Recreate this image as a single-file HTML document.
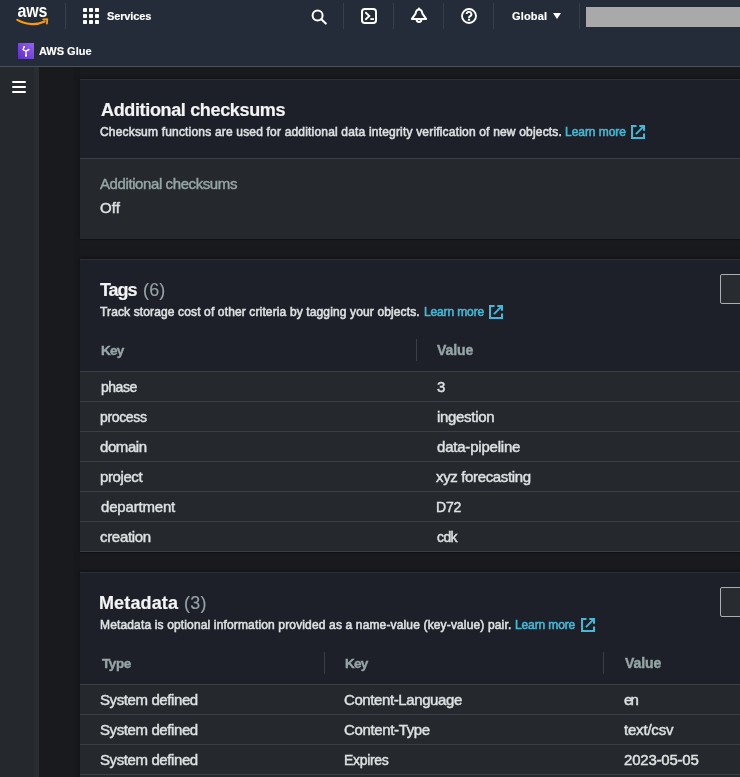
<!DOCTYPE html>
<html><head><meta charset="utf-8"><style>
html,body{margin:0;padding:0;width:740px;height:777px;overflow:hidden;background:#191a1e}
.box{position:absolute;box-sizing:content-box}
.t{position:absolute;white-space:nowrap;line-height:20px;font-family:"Liberation Sans",sans-serif;-webkit-text-stroke:0.45px currentColor;will-change:transform}
.ico{position:absolute;overflow:visible;will-change:transform}
</style></head><body>
<div class="box" style="left:0;top:0;width:740px;height:66px;background:#232c38"></div>
<div class="box" style="left:0;top:66px;width:740px;height:1px;background:#4b525b"></div>
<svg class="ico" style="left:0;top:0" width="60" height="30" viewBox="0 0 60 30">
<text x="17.6" y="16.6" font-family="Liberation Sans" font-size="18.6" font-weight="700" fill="#ffffff" transform="translate(17.6 0) scale(0.86 1) translate(-17.6 0)" letter-spacing="-0.2">aws</text>
<path d="M17.3 19.9 Q31 27.5 44.6 21.4" fill="none" stroke="#ff9900" stroke-width="2.2" stroke-linecap="round"/>
<path d="M43.2 19.3 L47.3 19.1 L46.9 23.6" fill="none" stroke="#ff9900" stroke-width="1.8" stroke-linecap="round" stroke-linejoin="round"/>
</svg>
<div class="box" style="left:65px;top:3px;width:1px;height:26px;background:#36404c"></div>
<div class="box" style="left:343px;top:3px;width:1px;height:26px;background:#36404c"></div>
<div class="box" style="left:393px;top:3px;width:1px;height:26px;background:#36404c"></div>
<div class="box" style="left:443px;top:3px;width:1px;height:26px;background:#36404c"></div>
<div class="box" style="left:493px;top:3px;width:1px;height:26px;background:#36404c"></div>
<div class="box" style="left:579px;top:3px;width:1px;height:26px;background:#36404c"></div>
<svg class="ico" style="left:83px;top:8px" width="16" height="16" viewBox="0 0 16 16"><rect x="0" y="0" width="4" height="4" rx="0.8" fill="#fff"/><rect x="6" y="0" width="4" height="4" rx="0.8" fill="#fff"/><rect x="12" y="0" width="4" height="4" rx="0.8" fill="#fff"/><rect x="0" y="6" width="4" height="4" rx="0.8" fill="#fff"/><rect x="6" y="6" width="4" height="4" rx="0.8" fill="#fff"/><rect x="12" y="6" width="4" height="4" rx="0.8" fill="#fff"/><rect x="0" y="12" width="4" height="4" rx="0.8" fill="#fff"/><rect x="6" y="12" width="4" height="4" rx="0.8" fill="#fff"/><rect x="12" y="12" width="4" height="4" rx="0.8" fill="#fff"/></svg>
<svg class="ico" style="left:0;top:0" width="1" height="1"><circle cx="317.6" cy="15.6" r="5" fill="none" stroke="#fff" stroke-width="2"/><path d="M321.3 19.3L325.8 23.6" stroke="#fff" stroke-width="2.1" stroke-linecap="round"/></svg>
<svg class="ico" style="left:361px;top:8px" width="16" height="16" viewBox="0 0 16 16"><rect x="1" y="1" width="14" height="14" rx="2.8" fill="none" stroke="#fff" stroke-width="2"/><path d="M4.3 4.3L8.3 8L4.3 11.7" fill="none" stroke="#fff" stroke-width="1.9"/><path d="M9.3 11.1h3.7" stroke="#fff" stroke-width="1.8"/></svg>
<svg class="ico" style="left:0;top:0" width="1" height="1"><path d="M419 9.6C416.6 9.6 415.9 11.6 415.6 13.6L411.9 18.9H426.1L422.4 13.6C422.1 11.6 421.4 9.6 419 9.6Z" fill="none" stroke="#fff" stroke-width="2" stroke-linejoin="round"/><circle cx="419" cy="8.6" r="1" fill="#fff"/><path d="M416.6 19.6A2.4 2.4 0 0 0 421.4 19.6" fill="none" stroke="#fff" stroke-width="2"/></svg>
<svg class="ico" style="left:461px;top:8px" width="16" height="16" viewBox="0 0 16 16"><circle cx="8" cy="8" r="7" fill="none" stroke="#fff" stroke-width="1.9"/><path d="M5.6 6.1a2.4 2.3 0 1 1 3.5 2.1c-.8.4-1.1.8-1.1 1.8" fill="none" stroke="#fff" stroke-width="1.9"/><rect x="6.9" y="10.7" width="2.2" height="2" fill="#fff"/></svg>
<svg class="ico" style="left:553px;top:13px" width="8" height="6" viewBox="0 0 8 6"><path d="M0 0h8L4 6z" fill="#fff"/></svg>
<div class="box" style="left:586px;top:7px;width:160px;height:20px;background:#a9a9a9"></div>
<svg class="ico" style="left:18px;top:43px" width="16" height="16" viewBox="0 0 16 16">
<defs><linearGradient id="gg" x1="0" y1="1" x2="1" y2="0"><stop offset="0" stop-color="#5a30c0"/><stop offset="1" stop-color="#9a5cff"/></linearGradient></defs>
<rect width="16" height="16" fill="url(#gg)"/>
<path d="M8 13V8.3L5 6.6L6.2 3.8M8 8.3L10.6 6.6" fill="none" stroke="#fff" stroke-width="1.3" stroke-linejoin="round" stroke-linecap="round"/><circle cx="6.2" cy="3.8" r="0.9" fill="#fff"/><circle cx="10.6" cy="6.6" r="0.9" fill="#fff"/><rect x="7.1" y="11.6" width="1.8" height="1.8" fill="#fff"/>
</svg>
<div class="box" style="left:0;top:67px;width:39px;height:710px;background:#25282c"></div>
<div class="box" style="left:34px;top:67px;width:5px;height:710px;background:#292c31"></div>
<div class="box" style="left:12px;top:81px;width:14px;height:2px;background:#fff;border-radius:1px"></div>
<div class="box" style="left:12px;top:86px;width:14px;height:2px;background:#fff;border-radius:1px"></div>
<div class="box" style="left:12px;top:91px;width:14px;height:2px;background:#fff;border-radius:1px"></div>
<div class="box" style="left:39px;top:67px;width:701px;height:710px;background:#191a1e"></div>
<div class="box" style="left:73px;top:67px;width:7px;height:710px;background:#17181b"></div>
<div class="box" style="left:80px;top:79px;width:700px;height:160px;background:#25282c;box-shadow:0 1px 0 #101115, 0 -1px 3px rgba(0,0,0,.4)"></div>
<div class="box" style="left:80px;top:79px;width:700px;height:79px;background:#1e2029"></div>
<div class="box" style="left:80px;top:79px;width:700px;height:1px;background:#2c3038"></div>
<div class="box" style="left:80px;top:158px;width:700px;height:1px;background:#3a3f46"></div>
<svg class="ico" style="left:631px;top:125px" width="14" height="14" viewBox="0 0 14 14"><path d="M5.5 1H1V13H13V8.5" fill="none" stroke="#44b9d6" stroke-width="2"/><path d="M8.3 1H13V5.7" fill="none" stroke="#44b9d6" stroke-width="2"/><path d="M12.6 1.4L4.9 9.1" fill="none" stroke="#44b9d6" stroke-width="2"/></svg>
<div class="box" style="left:80px;top:259px;width:700px;height:293px;background:#25282c;box-shadow:0 1px 0 #101115, 0 -1px 3px rgba(0,0,0,.4)"></div>
<div class="box" style="left:80px;top:259px;width:700px;height:112px;background:#1e2029"></div>
<div class="box" style="left:80px;top:259px;width:700px;height:1px;background:#2c3038"></div>
<svg class="ico" style="left:489px;top:305px" width="14" height="14" viewBox="0 0 14 14"><path d="M5.5 1H1V13H13V8.5" fill="none" stroke="#44b9d6" stroke-width="2"/><path d="M8.3 1H13V5.7" fill="none" stroke="#44b9d6" stroke-width="2"/><path d="M12.6 1.4L4.9 9.1" fill="none" stroke="#44b9d6" stroke-width="2"/></svg>
<div class="box" style="left:720px;top:274px;width:40px;height:28px;border:1px solid #a9afb0;border-radius:2px;background:#282b2f"></div>
<div class="box" style="left:416px;top:339px;width:1px;height:22px;background:#3a3f46"></div>
<div class="box" style="left:80px;top:371px;width:700px;height:1px;background:#3a3f46"></div>
<div class="box" style="left:80px;top:401px;width:700px;height:1px;background:#3a3f46"></div>
<div class="box" style="left:80px;top:431px;width:700px;height:1px;background:#3a3f46"></div>
<div class="box" style="left:80px;top:461px;width:700px;height:1px;background:#3a3f46"></div>
<div class="box" style="left:80px;top:491px;width:700px;height:1px;background:#3a3f46"></div>
<div class="box" style="left:80px;top:521px;width:700px;height:1px;background:#3a3f46"></div>
<div class="box" style="left:80px;top:551px;width:700px;height:1px;background:#3a3f46"></div>
<div class="box" style="left:80px;top:572px;width:700px;height:212px;background:#25282c;box-shadow:0 1px 0 #101115, 0 -1px 3px rgba(0,0,0,.4)"></div>
<div class="box" style="left:80px;top:572px;width:700px;height:112px;background:#1e2029"></div>
<div class="box" style="left:80px;top:572px;width:700px;height:1px;background:#2c3038"></div>
<svg class="ico" style="left:581px;top:618px" width="14" height="14" viewBox="0 0 14 14"><path d="M5.5 1H1V13H13V8.5" fill="none" stroke="#44b9d6" stroke-width="2"/><path d="M8.3 1H13V5.7" fill="none" stroke="#44b9d6" stroke-width="2"/><path d="M12.6 1.4L4.9 9.1" fill="none" stroke="#44b9d6" stroke-width="2"/></svg>
<div class="box" style="left:720px;top:587px;width:40px;height:28px;border:1px solid #a9afb0;border-radius:2px;background:#282b2f"></div>
<div class="box" style="left:324px;top:652px;width:1px;height:22px;background:#3a3f46"></div>
<div class="box" style="left:603px;top:652px;width:1px;height:22px;background:#3a3f46"></div>
<div class="box" style="left:80px;top:684px;width:700px;height:1px;background:#3a3f46"></div>
<div class="box" style="left:80px;top:714px;width:700px;height:1px;background:#3a3f46"></div>
<div class="box" style="left:80px;top:744px;width:700px;height:1px;background:#3a3f46"></div>
<div class="box" style="left:80px;top:774px;width:700px;height:1px;background:#3a3f46"></div>
<div class="t" style="left:107.40px;top:6px;font-size:11px;font-weight:700;color:#ffffff;letter-spacing:-0.143px;-webkit-text-stroke:0.15px #ffffff;">Services</div>
<div class="t" style="left:511.60px;top:6px;font-size:11px;font-weight:700;color:#ffffff;letter-spacing:0.180px;-webkit-text-stroke:0.15px #ffffff;">Global</div>
<div class="t" style="left:39.00px;top:41px;font-size:11px;font-weight:700;color:#ffffff;letter-spacing:0.000px;-webkit-text-stroke:0.15px #ffffff;">AWS Glue</div>
<div class="t" style="left:100.80px;top:100px;font-size:18px;font-weight:700;color:#f2f3f3;letter-spacing:-0.347px;-webkit-text-stroke:0.2px #f2f3f3;">Additional checksums</div>
<div class="t" style="left:100.00px;top:122px;font-size:12px;font-weight:400;color:#dce1e1;letter-spacing:0.184px;-webkit-text-stroke:0.55px #dce1e1;">Checksum functions are used for additional data integrity verification of new objects.</div>
<div class="t" style="left:565.00px;top:122px;font-size:12px;font-weight:400;color:#44b9d6;letter-spacing:-0.044px;-webkit-text-stroke:0.55px #44b9d6;">Learn more</div>
<div class="t" style="left:100.40px;top:174px;font-size:15.0px;font-weight:400;color:#95a5a6;letter-spacing:-0.405px;-webkit-text-stroke:0.45px #95a5a6;">Additional checksums</div>
<div class="t" style="left:100.40px;top:198px;font-size:15.0px;font-weight:400;color:#dce1e1;letter-spacing:0.150px;-webkit-text-stroke:0.45px #dce1e1;">Off</div>
<div class="t" style="left:100.30px;top:280px;font-size:18px;font-weight:700;color:#f2f3f3;letter-spacing:-1.067px;-webkit-text-stroke:0.2px #f2f3f3;">Tags</div>
<div class="t" style="left:143.00px;top:280px;font-size:18px;font-weight:400;color:#95a5a6;letter-spacing:0.150px;-webkit-text-stroke:0.1px #95a5a6;">(6)</div>
<div class="t" style="left:100.00px;top:302px;font-size:12px;font-weight:400;color:#dce1e1;letter-spacing:0.133px;-webkit-text-stroke:0.55px #dce1e1;">Track storage cost of other criteria by tagging your objects.</div>
<div class="t" style="left:423.90px;top:302px;font-size:12px;font-weight:400;color:#44b9d6;letter-spacing:-0.133px;-webkit-text-stroke:0.55px #44b9d6;">Learn more</div>
<div class="t" style="left:101.40px;top:341px;font-size:13.5px;font-weight:700;color:#95a5a6;letter-spacing:-0.750px;-webkit-text-stroke:0.4px #95a5a6;">Key</div>
<div class="t" style="left:437.20px;top:340px;font-size:14px;font-weight:700;color:#95a5a6;letter-spacing:-0.075px;-webkit-text-stroke:0.4px #95a5a6;">Value</div>
<div class="t" style="left:100.70px;top:377px;font-size:14px;font-weight:400;color:#dce1e1;letter-spacing:-0.475px;-webkit-text-stroke:0.45px #dce1e1;">phase</div>
<div class="t" style="left:436.80px;top:377px;font-size:15.0px;font-weight:400;color:#dce1e1;letter-spacing:0.000px;-webkit-text-stroke:0.45px #dce1e1;">3</div>
<div class="t" style="left:100.40px;top:407px;font-size:14px;font-weight:400;color:#dce1e1;letter-spacing:-0.350px;-webkit-text-stroke:0.45px #dce1e1;">process</div>
<div class="t" style="left:436.60px;top:407px;font-size:15.0px;font-weight:400;color:#dce1e1;letter-spacing:-0.312px;-webkit-text-stroke:0.45px #dce1e1;">ingestion</div>
<div class="t" style="left:100.40px;top:437px;font-size:15.0px;font-weight:400;color:#dce1e1;letter-spacing:-0.420px;-webkit-text-stroke:0.45px #dce1e1;">domain</div>
<div class="t" style="left:436.60px;top:437px;font-size:15.0px;font-weight:400;color:#dce1e1;letter-spacing:-0.208px;-webkit-text-stroke:0.45px #dce1e1;">data-pipeline</div>
<div class="t" style="left:100.40px;top:467px;font-size:15.0px;font-weight:400;color:#dce1e1;letter-spacing:-0.400px;-webkit-text-stroke:0.45px #dce1e1;">project</div>
<div class="t" style="left:436.00px;top:467px;font-size:15.0px;font-weight:400;color:#dce1e1;letter-spacing:-0.350px;-webkit-text-stroke:0.45px #dce1e1;">xyz forecasting</div>
<div class="t" style="left:100.50px;top:497px;font-size:15.0px;font-weight:400;color:#dce1e1;letter-spacing:-0.178px;-webkit-text-stroke:0.45px #dce1e1;">department</div>
<div class="t" style="left:436.00px;top:497px;font-size:14px;font-weight:400;color:#dce1e1;letter-spacing:-0.150px;-webkit-text-stroke:0.45px #dce1e1;">D72</div>
<div class="t" style="left:100.40px;top:527px;font-size:15.0px;font-weight:400;color:#dce1e1;letter-spacing:-0.314px;-webkit-text-stroke:0.45px #dce1e1;">creation</div>
<div class="t" style="left:436.60px;top:527px;font-size:14px;font-weight:400;color:#dce1e1;letter-spacing:-0.600px;-webkit-text-stroke:0.45px #dce1e1;">cdk</div>
<div class="t" style="left:99.30px;top:593px;font-size:18px;font-weight:700;color:#f2f3f3;letter-spacing:0.129px;-webkit-text-stroke:0.2px #f2f3f3;">Metadata</div>
<div class="t" style="left:184.10px;top:593px;font-size:18px;font-weight:400;color:#95a5a6;letter-spacing:0.300px;-webkit-text-stroke:0.1px #95a5a6;">(3)</div>
<div class="t" style="left:100.00px;top:615px;font-size:12px;font-weight:400;color:#dce1e1;letter-spacing:0.149px;-webkit-text-stroke:0.55px #dce1e1;">Metadata is optional information provided as a name-value (key-value) pair.</div>
<div class="t" style="left:515.10px;top:615px;font-size:12px;font-weight:400;color:#44b9d6;letter-spacing:-0.122px;-webkit-text-stroke:0.55px #44b9d6;">Learn more</div>
<div class="t" style="left:102.30px;top:654px;font-size:13.5px;font-weight:700;color:#95a5a6;letter-spacing:-0.433px;-webkit-text-stroke:0.4px #95a5a6;">Type</div>
<div class="t" style="left:345.30px;top:654px;font-size:13.5px;font-weight:700;color:#95a5a6;letter-spacing:-0.700px;-webkit-text-stroke:0.4px #95a5a6;">Key</div>
<div class="t" style="left:624.50px;top:653px;font-size:14px;font-weight:700;color:#95a5a6;letter-spacing:-0.075px;-webkit-text-stroke:0.4px #95a5a6;">Value</div>
<div class="t" style="left:100.40px;top:690px;font-size:15.0px;font-weight:400;color:#dce1e1;letter-spacing:-0.400px;-webkit-text-stroke:0.45px #dce1e1;">System defined</div>
<div class="t" style="left:344.10px;top:690px;font-size:15.0px;font-weight:400;color:#dce1e1;letter-spacing:-0.400px;-webkit-text-stroke:0.45px #dce1e1;">Content-Language</div>
<div class="t" style="left:623.90px;top:690px;font-size:15.0px;font-weight:400;color:#dce1e1;letter-spacing:-1.800px;-webkit-text-stroke:0.45px #dce1e1;">en</div>
<div class="t" style="left:100.40px;top:720px;font-size:15.0px;font-weight:400;color:#dce1e1;letter-spacing:-0.400px;-webkit-text-stroke:0.45px #dce1e1;">System defined</div>
<div class="t" style="left:344.10px;top:720px;font-size:15.0px;font-weight:400;color:#dce1e1;letter-spacing:-0.355px;-webkit-text-stroke:0.45px #dce1e1;">Content-Type</div>
<div class="t" style="left:623.90px;top:720px;font-size:15.0px;font-weight:400;color:#dce1e1;letter-spacing:-0.200px;-webkit-text-stroke:0.45px #dce1e1;">text/csv</div>
<div class="t" style="left:100.40px;top:750px;font-size:15.0px;font-weight:400;color:#dce1e1;letter-spacing:-0.400px;-webkit-text-stroke:0.45px #dce1e1;">System defined</div>
<div class="t" style="left:343.50px;top:750px;font-size:14px;font-weight:400;color:#dce1e1;letter-spacing:-0.333px;-webkit-text-stroke:0.45px #dce1e1;">Expires</div>
<div class="t" style="left:623.90px;top:750px;font-size:15.0px;font-weight:400;color:#dce1e1;letter-spacing:-0.211px;-webkit-text-stroke:0.45px #dce1e1;">2023-05-05</div>
</body></html>
